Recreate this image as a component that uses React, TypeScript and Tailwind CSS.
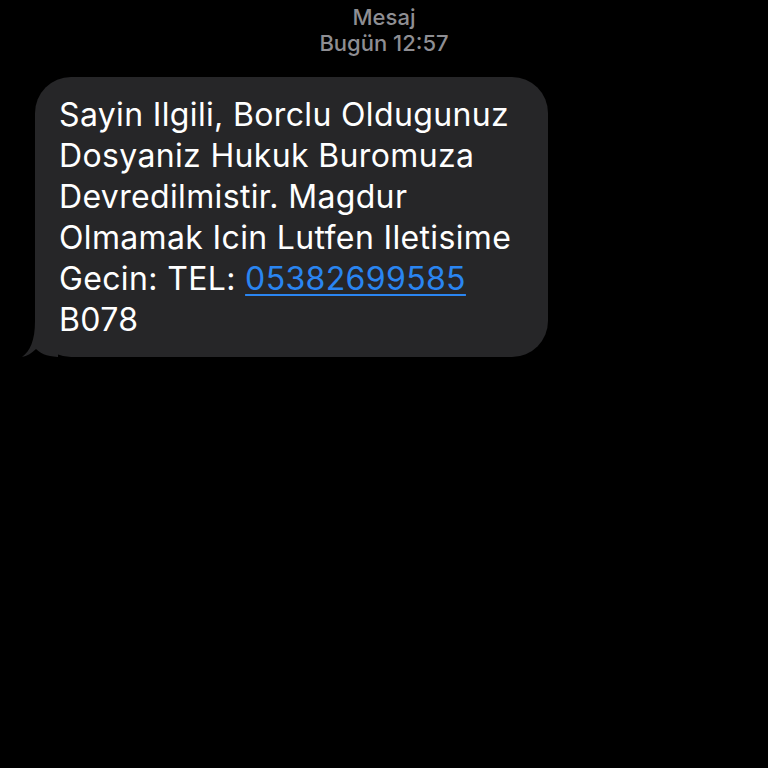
export default function App() {
  const lines = [
    'Sayin Ilgili, Borclu Oldugunuz',
    'Dosyaniz Hukuk Buromuza',
    'Devredilmistir. Magdur',
    'Olmamak Icin Lutfen Iletisime',
  ];

  return (
    <div
      className="w-[768px] h-[768px] bg-black overflow-hidden"
      style={{ fontFamily: 'Inter, "Noto Sans", sans-serif' }}
    >
      {/* Header */}
      <div className="flex flex-col items-center pt-[4px] text-[#8e8e93] text-[22px] leading-[26px] font-medium">
        <span>Mesaj</span>
        <span>Bugün 12:57</span>
      </div>

      {/* Incoming bubble */}
      <div className="pl-[35px] pt-[21px]">
        <div className="relative w-[513px] bg-[#262628] rounded-[36px] pl-[24px] pr-[16px] pt-[17px] pb-[17px] text-white text-[32px] leading-[41px] tracking-[0.35px]">
          <svg
            className="absolute left-[-13px] bottom-0"
            width="40"
            height="36"
            viewBox="0 0 40 36"
          >
            <path
              d="M13 0 L36 0 L36 36 L40 36 C28 36 20 34 14 28 C10 32 5 35 0 36 C8 30 13 20 13 0 Z"
              fill="#262628"
            />
          </svg>
          <div className="relative">
            {lines.map((l, i) => (
              <div key={i} className="whitespace-nowrap">{l}</div>
            ))}
            <div className="whitespace-nowrap">
              Gecin: TEL:{' '}
              <span className="text-[#2a85f1] underline underline-offset-[4px] decoration-[2px]">05382699585</span>
            </div>
            <div>B078</div>
          </div>
        </div>
      </div>
    </div>
  );
}
